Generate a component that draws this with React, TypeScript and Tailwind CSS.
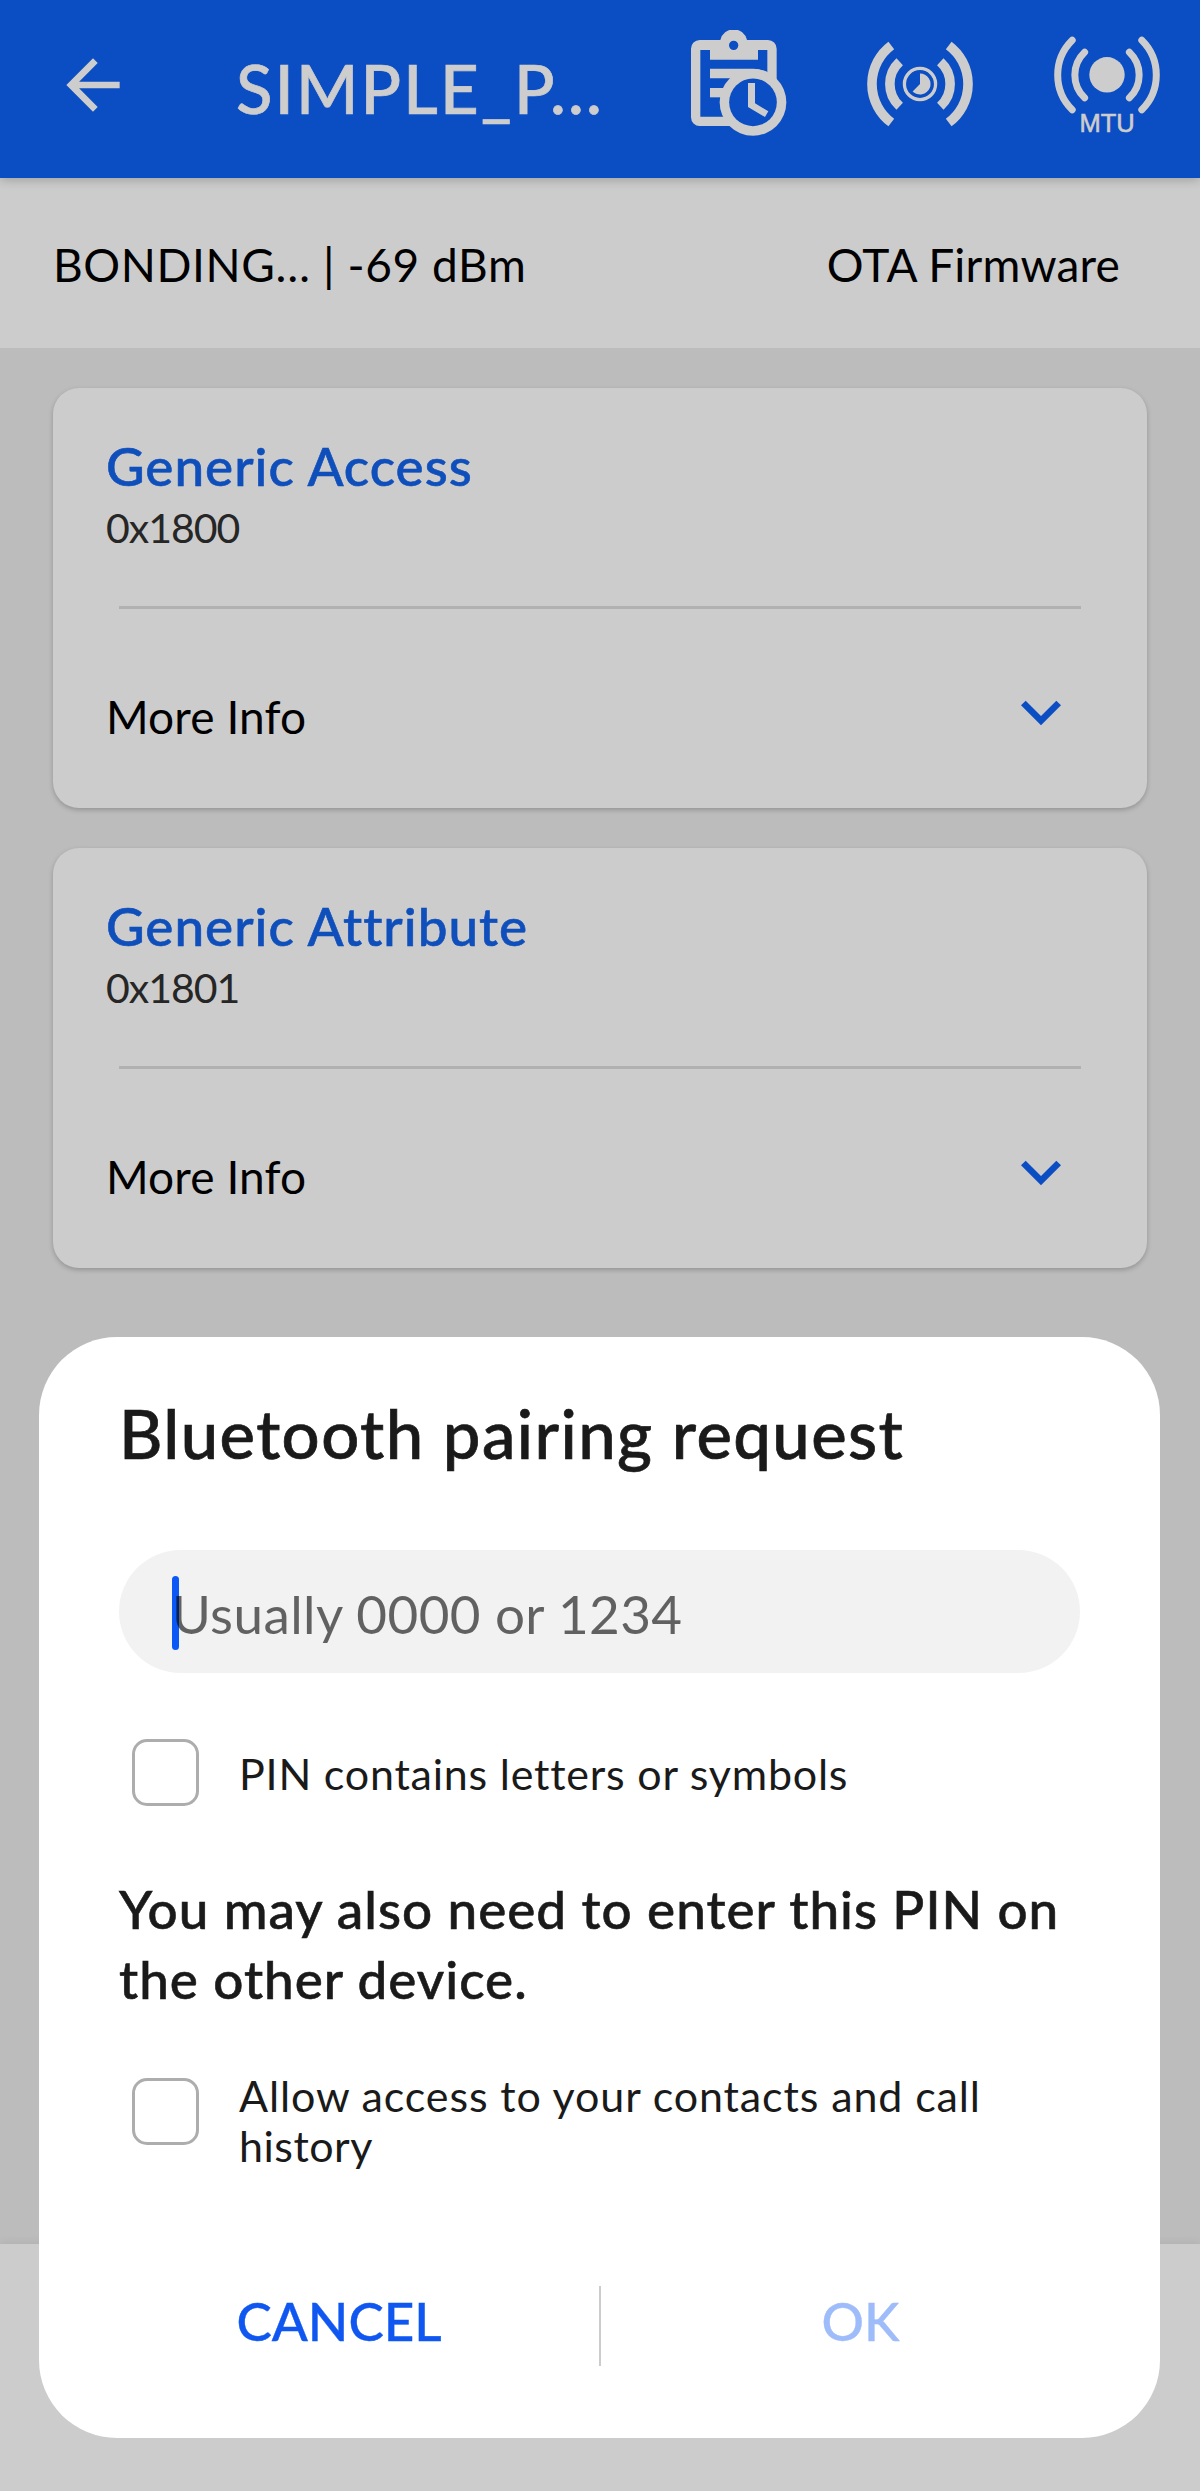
import type { ReactNode } from "react";

function BackIcon() {
  return (
    <svg className="ml-[53px] size-20 shrink-0" viewBox="0 0 24 24" fill="currentColor">
      <path d="M20 11H7.83l5.59-5.59L12 4l-8 8 8 8 1.41-1.41L7.83 13H20v-2z" />
    </svg>
  );
}

function LogIcon() {
  return (
    <svg className="h-[108px] w-[100px]" viewBox="87 60 300 324">
      <g fill="currentColor">
        <path
          fillRule="evenodd"
          d="M119 90H181A41 41 0 0 1 261 90H324A26 26 0 0 1 350 116V322A26 26 0 0 1 324 348H119A26 26 0 0 1 93 322V116A26 26 0 0 1 119 90ZM121 120V320H322V120H294V149H150V120ZM221 92A14 14 0 0 0 221 120A14 14 0 0 0 221 92Z"
        />
        <path d="M150 176H280Q304 177 324 187L300 240H240L212 205H150Z" />
        <path d="M150 234H200V262H150Z" />
        <circle cx="279" cy="277" r="100" />
      </g>
      <circle cx="279" cy="277" r="71.5" fill="#0b4dc2" />
      <path d="M264 219H285V280L325 304L315 321L264 291Z" fill="currentColor" />
    </svg>
  );
}

function BroadcastIcon() {
  return (
    <svg className="h-[108px] w-[110px]" viewBox="-55 -54 110 108" fill="none" stroke="currentColor">
      <g strokeWidth="9.6">
        <path d="M-28.7 -38.5A48 48 0 0 0 -28.7 38.5M28.7 -38.5A48 48 0 0 1 28.7 38.5" />
        <path d="M-20.3 -22.3A30.2 30.2 0 0 0 -20.3 22.3M20.3 -22.3A30.2 30.2 0 0 1 20.3 22.3" />
      </g>
      <circle r="15.6" strokeWidth="3.3" />
      <path d="M0 0V-10.5A10.5 10.5 0 1 1 -7.4 7.4Z" fill="currentColor" stroke="none" />
    </svg>
  );
}

function MtuIcon() {
  return (
    <svg className="h-[108px] w-[110px]" viewBox="-55 -54 110 108">
      <g fill="none" stroke="currentColor" strokeWidth="7" strokeLinecap="round">
        <path d="M-34.8 -43.8A49 49 0 0 0 -34.8 25.8M34.8 -43.8A49 49 0 0 1 34.8 25.8" />
        <path d="M-22.4 -31.8A31.5 31.5 0 0 0 -22.4 13.8M22.4 -31.8A31.5 31.5 0 0 1 22.4 13.8" />
      </g>
      <circle cy="-9.2" r="17.7" fill="currentColor" />
      <text
        y="47.5"
        textAnchor="middle"
        fill="currentColor"
        stroke="currentColor"
        strokeWidth="0.6"
        className="font-['Liberation_Sans'] text-[25.5px]"
      >
        MTU
      </text>
    </svg>
  );
}

function ServiceCard({ name, uuid }: { name: string; uuid: string }) {
  return (
    <section className="h-[420px] rounded-[26px] bg-[#cccccc] pt-[48px] pl-[53px] shadow-[0_2px_5px_rgba(0,0,0,0.22)]">
      <h2 className="text-[53px] leading-[60px] font-medium tracking-[1px] text-[#0f4fbc] [-webkit-text-stroke:0.6px]">
        {name}
      </h2>
      <p className="mt-[5px] text-[41px] leading-[54px] tracking-[-1px] text-[#262626]">{uuid}</p>
      <hr className="mt-[51px] mr-[66px] ml-[13px] h-[3px] border-0 bg-[#b1b1b1]" />
      <div className="mt-[59px] flex h-[86px] items-start justify-between pr-[66px]">
        <span className="mt-[18px] text-[46px] leading-[62px] tracking-[0.1px] text-black">{"More Info"}</span>
        <svg className="mt-[4px] size-20 text-[#0b4dc2]" viewBox="0 0 24 24" fill="currentColor">
          <path d="M7.41 8.59 12 13.17l4.59-4.58L18 10l-6 6-6-6z" />
        </svg>
      </div>
    </section>
  );
}

function CheckRow({ children, className }: { children: ReactNode; className: string }) {
  return (
    <label className={"flex items-start pl-[13px] " + className}>
      <span className="size-[67px] shrink-0 rounded-[15px] border-[3px] border-[#adadad]" />
      <span className="ml-[40px] text-[43px] leading-[50px]">{children}</span>
    </label>
  );
}

function PairingDialog() {
  return (
    <div
      role="dialog"
      className="absolute top-[1337px] left-[39px] h-[1101px] w-[1121px] rounded-[78px] bg-white px-[80px] pt-[56px] text-[#1a1a1a]"
    >
      <h1 className="text-[67px] leading-[80px] font-medium tracking-[1.4px] [-webkit-text-stroke:0.7px]">
        Bluetooth pairing request
      </h1>
      <div className="relative mt-[77px] flex h-[123px] items-start rounded-full bg-[#f2f2f2] pl-[53px]">
        <span className="absolute top-[26px] left-[53px] h-[74px] w-[7px] rounded-full bg-[#0a59f7]" />
        <span className="relative mt-[34px] text-[53px] leading-[60px] tracking-[0.4px] text-black/60">
          Usually 0000 or 1234
        </span>
      </div>
      <CheckRow className="mt-[66px]">
        <span className="mt-[10px] block tracking-[0.78px]">PIN contains letters or symbols</span>
      </CheckRow>
      <p className="mt-[68px] text-[53px] leading-[69.5px] font-medium tracking-[1px] [-webkit-text-stroke:0.6px]">
        You may also need to enter this PIN on
        <br />
        the other device.
      </p>
      <CheckRow className="mt-[65px]">
        <span className="-mt-[7px] block tracking-[0.88px]">
          Allow access to your contacts and call
          <br />
          <span className="tracking-[0.5px]">history</span>
        </span>
      </CheckRow>
      <div className="mt-[115px] flex h-[80px] text-[53px] leading-[70px] font-medium [-webkit-text-stroke:0.4px]">
        <button className="h-[70px] w-[480px] pr-[40px] text-center">
          <span className="text-[#0f57f0]">CANCEL</span>
        </button>
        <span className="h-full w-[2px] bg-[#cccccc]" />
        <button className="h-[70px] w-[479px] pl-[40px] text-center text-[#9ebcfa]">OK</button>
      </div>
    </div>
  );
}

export default function App() {
  return (
    <main className="relative flex h-[2491px] w-[1200px] flex-col overflow-hidden bg-[#bcbcbc] font-[Lato,'Noto_Sans',sans-serif] whitespace-nowrap">
      <header className="relative z-10 flex h-[178px] shrink-0 items-start bg-[#0b4dc2] text-[#cdcdcd] shadow-[0_2px_10px_rgba(0,0,0,0.22)]">
        <div className="flex h-[169px] items-center">
          <BackIcon />
        </div>
        <h1 className="mt-[48px] ml-[103px] w-[400px] text-[67px] leading-[80px] font-medium tracking-[2.2px] [-webkit-text-stroke:0.7px]">
          SIMPLE_P...
        </h1>
        <div className="mt-[30px] flex">
          <div className="ml-[53px] w-[176px]">
            <LogIcon />
          </div>
          <div className="w-[187px]">
            <BroadcastIcon />
          </div>
          <MtuIcon />
        </div>
      </header>
      <div className="flex h-[170px] shrink-0 items-start justify-between bg-[#cccccc] pt-[57px] pr-[80px] pl-[53px] text-[46px] leading-[60px] text-black">
        <span className="tracking-[0.6px]">BONDING… | -69 dBm</span>
        <span className="tracking-[0.2px]">OTA Firmware</span>
      </div>
      <div className="mx-[53px] mt-[40px] flex flex-col gap-[40px]">
        <ServiceCard name="Generic Access" uuid="0x1800" />
        <ServiceCard name="Generic Attribute" uuid="0x1801" />
      </div>
      <footer className="mt-auto h-[247px] shrink-0 bg-[#cccccc] shadow-[0_-2px_8px_rgba(0,0,0,0.06)]" />
      <PairingDialog />
    </main>
  );
}
